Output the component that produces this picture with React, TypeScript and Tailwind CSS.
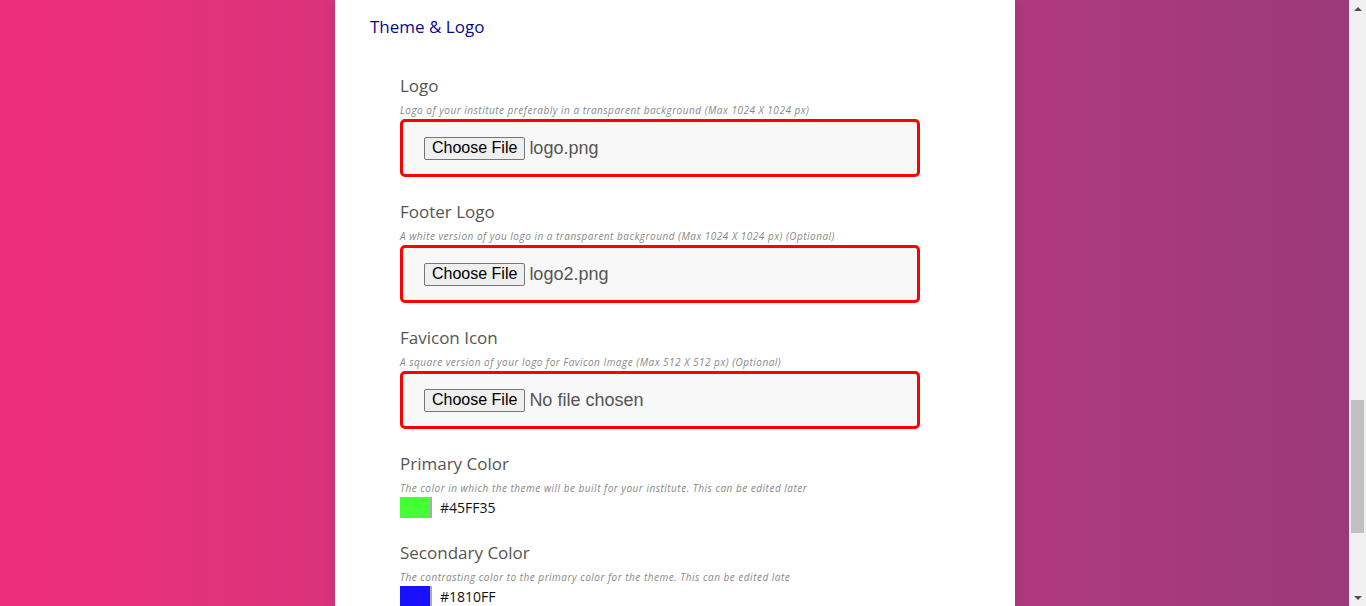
import React from 'react';

interface FileFieldProps {
  label: string;
  hint: string;
  fileName: string;
}

const FileField: React.FC<FileFieldProps> = ({ label, hint, fileName }) => {
  return (
    <div>
      <div className="text-[17px] leading-[25px] text-[#555]">{label}</div>
      <div className="mt-[5px] text-[10px] leading-[14px] italic tracking-[0.5px] text-[#888]">{hint}</div>
      <div className="mt-[2px] w-[520px] h-[58px] border-[3px] border-[#ff0000] rounded-[5px] bg-[#f8f8f8] flex items-center pl-[21px]">
        <span
          className="h-[23px] px-[7px] flex items-center border border-[#767676] rounded-[2px] bg-[#efefef] text-[16px] text-black"
          style={{ fontFamily: '"Liberation Sans", Arial, sans-serif' }}
        >
          Choose File
        </span>
        <span
          className="ml-[4px] text-[18px] text-[#555]"
          style={{ fontFamily: '"Liberation Sans", Arial, sans-serif' }}
        >
          {fileName}
        </span>
      </div>
    </div>
  );
};

interface ColorFieldProps {
  label: string;
  hint: string;
  swatch: string;
  value: string;
}

const ColorField: React.FC<ColorFieldProps> = ({ label, hint, swatch, value }) => {
  return (
    <div>
      <div className="text-[17px] leading-[25px] text-[#555]">{label}</div>
      <div className="mt-[5px] text-[10px] leading-[14px] italic tracking-[0.5px] text-[#888]">{hint}</div>
      <div className="mt-[2px] flex items-center">
        <div className={`w-[32px] h-[21px] border-r-2 border-[#aaa] ${swatch}`}></div>
        <span className="ml-[8px] text-[14px] text-[#111]">{value}</span>
      </div>
    </div>
  );
};

export default function App() {
  return (
    <div
      className="w-full h-[606px] overflow-hidden flex"
      style={{ fontFamily: '"Open Sans", Lato, sans-serif' }}
    >
      {/* page */}
      <div className="flex-1 h-full bg-gradient-to-r from-[#ef2d7b] to-[#9b3a7a] flex">
        <div className="w-[335px] shrink-0"></div>
        <div className="w-[680px] h-full bg-white pt-[14px] pl-[35px] shadow-[0_0_12px_rgba(0,0,0,0.12)]">
          <h2 className="text-[17px] leading-[25px] text-[#0a0a8a]">Theme &amp; Logo</h2>

          <div className="mt-[34px] ml-[30px] flex flex-col gap-[22px]">
            <FileField
              label="Logo"
              hint="Logo of your institute preferably in a transparent background (Max 1024 X 1024 px)"
              fileName="logo.png"
            />
            <FileField
              label="Footer Logo"
              hint="A white version of you logo in a transparent background (Max 1024 X 1024 px) (Optional)"
              fileName="logo2.png"
            />
            <FileField
              label="Favicon Icon"
              hint="A square version of your logo for Favicon Image (Max 512 X 512 px) (Optional)"
              fileName="No file chosen"
            />
            <ColorField
              label="Primary Color"
              hint="The color in which the theme will be built for your institute. This can be edited later"
              swatch="bg-[#45ff35]"
              value="#45FF35"
            />
            <ColorField
              label="Secondary Color"
              hint="The contrasting color to the primary color for the theme. This can be edited late"
              swatch="bg-[#1810ff]"
              value="#1810FF"
            />
          </div>
        </div>
      </div>

      {/* scrollbar */}
      <div className="w-[17px] h-full bg-[#f1f1f1] flex flex-col items-center">
        <div className="h-[17px] flex items-center justify-center">
          <div className="w-0 h-0 border-l-[4px] border-r-[4px] border-b-[4px] border-l-transparent border-r-transparent border-b-[#505050]"></div>
        </div>
        <div className="flex-1 w-full px-[2px] pt-[383px]">
          <div className="w-full h-[133px] bg-[#c1c1c1]"></div>
        </div>
        <div className="h-[17px] flex items-center justify-center">
          <div className="w-0 h-0 border-l-[4px] border-r-[4px] border-t-[4px] border-l-transparent border-r-transparent border-t-[#505050]"></div>
        </div>
      </div>
    </div>
  );
}
